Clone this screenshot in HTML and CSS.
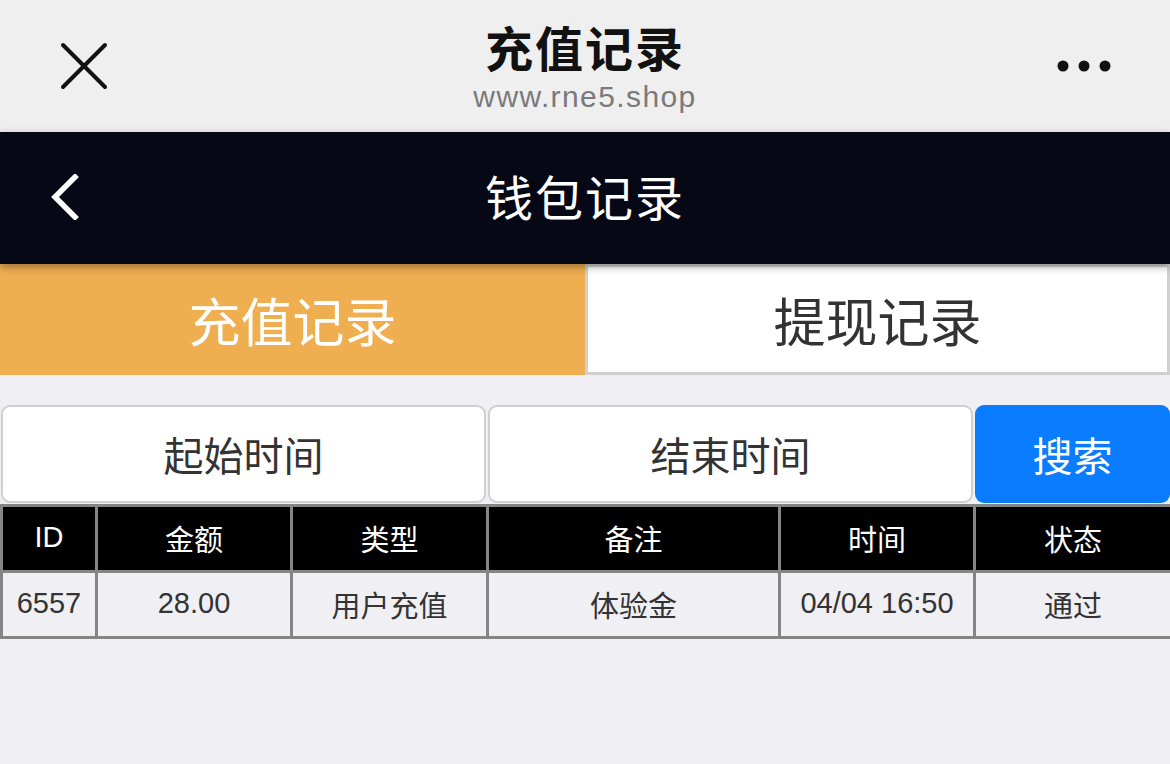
FILE: index.html
```html
<!DOCTYPE html>
<html lang="zh-CN">
<head>
<meta charset="utf-8">
<title>充值记录</title>
<link rel="stylesheet" href="styles.css">
</head>
<body>
<header class="topbar">
  <div class="top-close">
    <svg width="48" height="48" viewBox="0 0 48 48"><path d="M3 3 L45 45 M45 3 L3 45" stroke="#111" stroke-width="4" stroke-linecap="round" fill="none"/></svg>
  </div>
  <div class="top-title">
    <div class="top-name">充值记录</div>
    <div class="top-url">www.rne5.shop</div>
  </div>
  <div class="top-more">
    <svg width="56" height="14" viewBox="0 0 56 14"><circle cx="7" cy="7" r="5.5" fill="#111"/><circle cx="28" cy="7" r="5.5" fill="#111"/><circle cx="49" cy="7" r="5.5" fill="#111"/></svg>
  </div>
</header>
<nav class="navbar">
  <div class="nav-back">
    <svg width="34" height="46" viewBox="0 0 34 46"><path d="M26 3 L6 23 L26 43" stroke="#fff" stroke-width="5.5" stroke-linecap="square" fill="none"/></svg>
  </div>
  <div class="nav-title">钱包记录</div>
  <div class="nav-spacer"></div>
</nav>
<div class="tabs">
  <div class="tab tab-active">充值记录</div>
  <div class="tab tab-idle">提现记录</div>
</div>
<div class="search">
  <div class="field field-wide">起始时间</div>
  <div class="field field-wide">结束时间</div>
  <div class="field field-btn">搜索</div>
</div>
<table class="records">
  <colgroup>
    <col class="c1"><col class="c2"><col class="c3"><col class="c4"><col class="c5"><col class="c6">
  </colgroup>
  <thead>
    <tr><th>ID</th><th>金额</th><th>类型</th><th>备注</th><th>时间</th><th>状态</th></tr>
  </thead>
  <tbody>
    <tr><td>6557</td><td>28.00</td><td>用户充值</td><td>体验金</td><td>04/04 16:50</td><td>通过</td></tr>
  </tbody>
</table>
</body>
</html>
```
FILE: styles.css
```css
* { box-sizing: border-box; }
html, body { margin: 0; padding: 0; }
body {
  width: 1170px;
  height: 764px;
  background: #efeff4;
  font-family: "Liberation Sans", "Noto Sans CJK SC", sans-serif;
  overflow: hidden;
}
.topbar {
  height: 132px;
  background: #efefef;
  display: flex;
  align-items: flex-start;
  justify-content: space-between;
}
.top-close {
  width: 200px;
  padding: 42px 0 0 60px;
}
.top-close svg { display: block; }
.top-title {
  flex: 1;
  display: flex;
  flex-direction: column;
  align-items: center;
  padding-top: 23px;
}
.top-name {
  font-size: 48px;
  line-height: 56px;
  font-weight: bold;
  color: #111;
  letter-spacing: 2px;
}
.top-url {
  font-size: 30px;
  line-height: 36px;
  color: #7a7a7a;
  letter-spacing: 1.4px;
  margin-top: 0px;
}
.top-more {
  width: 200px;
  display: flex;
  justify-content: flex-end;
  padding: 59px 58px 0 0;
}
.top-more svg { display: block; }
.navbar {
  position: relative;
  z-index: 1;
  height: 132px;
  background: #060816;
  display: flex;
  align-items: center;
  box-shadow: 0 3px 8px rgba(0,0,0,0.35);
}
.nav-back {
  width: 200px;
  padding-left: 49px;
  padding-bottom: 2px;
}
.nav-back svg { display: block; }
.nav-title {
  flex: 1;
  text-align: center;
  color: #fff;
  font-size: 48px;
  letter-spacing: 2px;
  padding-bottom: 6px;
}
.nav-spacer { width: 200px; }
.tabs {
  display: flex;
  height: 111px;
}
.tab {
  display: flex;
  align-items: center;
  justify-content: center;
  font-size: 52px;
}
.tab-active {
  width: 585px;
  background: #efae50;
  color: #fff;
}
.tab-idle {
  flex: 1;
  background: #fff;
  color: #333;
  border: 3px solid #d0d0d0;
}
.search {
  display: flex;
  gap: 2px;
  margin-top: 30px;
  padding-left: 1px;
  height: 98px;
}
.field {
  display: flex;
  align-items: center;
  justify-content: center;
  font-size: 40px;
  border-radius: 9px;
}
.field-wide {
  width: 485px;
  background: #fff;
  color: #333;
  border: 2px solid #d0d0d0;
}
.field-btn {
  flex: 1;
  background: #0a7cff;
  color: #fff;
}
.records {
  margin-top: 1px;
  width: 1170px;
  border-collapse: collapse;
  table-layout: fixed;
  border: 3px solid #858585;
}
.c1 { width: 95px; }
.c2 { width: 195px; }
.c3 { width: 196px; }
.c4 { width: 292px; }
.c5 { width: 195px; }
.c6 { width: 197px; }
.records th, .records td {
  border: 3px solid #858585;
  text-align: center;
  font-size: 29px;
  font-weight: normal;
  padding: 0 0 2px 0;
}
.records th {
  background: #000;
  color: #fff;
  height: 66px;
}
.records td {
  background: #efeff4;
  color: #333;
  height: 66px;
}
```
